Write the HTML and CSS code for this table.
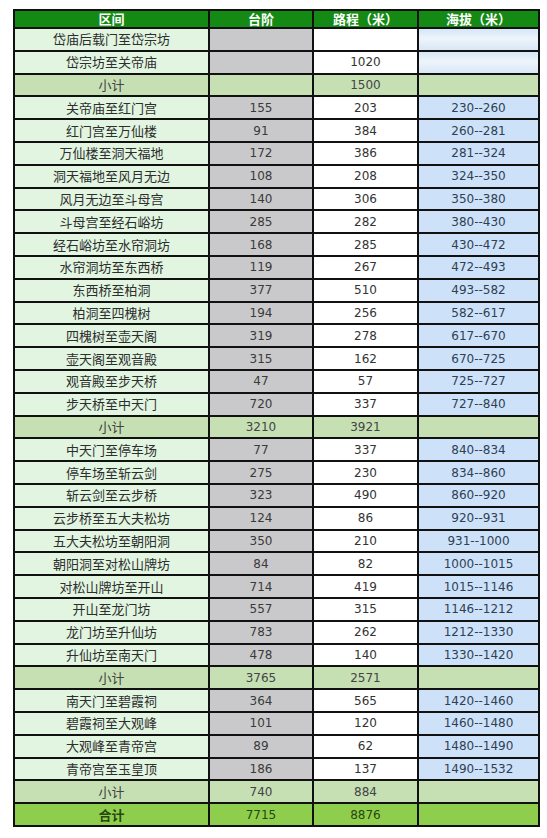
FILE: index.html
```html
<!DOCTYPE html>
<html lang="zh">
<head>
<meta charset="utf-8">
<title>泰山登山台阶路程海拔表</title>
<link rel="stylesheet" href="styles.css">
</head>
<body>
<table class="sheet">
  <colgroup>
    <col class="c-name"><col class="c-step"><col class="c-dist"><col class="c-alt">
  </colgroup>
  <thead>
    <tr class="head"><th>区间</th><th>台阶</th><th>路程（米）</th><th>海拔（米）</th></tr>
  </thead>
  <tbody>
    <tr><td class="name">岱庙后载门至岱宗坊</td><td class="step"></td><td class="dist"></td><td class="alt blur"></td></tr>
    <tr><td class="name">岱宗坊至关帝庙</td><td class="step"></td><td class="dist">1020</td><td class="alt blur"></td></tr>
    <tr class="sub"><td class="name">小计</td><td></td><td>1500</td><td></td></tr>
    <tr><td class="name">关帝庙至红门宫</td><td class="step">155</td><td class="dist">203</td><td class="alt">230--260</td></tr>
    <tr><td class="name">红门宫至万仙楼</td><td class="step">91</td><td class="dist">384</td><td class="alt">260--281</td></tr>
    <tr><td class="name">万仙楼至洞天福地</td><td class="step">172</td><td class="dist">386</td><td class="alt">281--324</td></tr>
    <tr><td class="name">洞天福地至风月无边</td><td class="step">108</td><td class="dist">208</td><td class="alt">324--350</td></tr>
    <tr><td class="name">风月无边至斗母宫</td><td class="step">140</td><td class="dist">306</td><td class="alt">350--380</td></tr>
    <tr><td class="name">斗母宫至经石峪坊</td><td class="step">285</td><td class="dist">282</td><td class="alt">380--430</td></tr>
    <tr><td class="name">经石峪坊至水帘洞坊</td><td class="step">168</td><td class="dist">285</td><td class="alt">430--472</td></tr>
    <tr><td class="name">水帘洞坊至东西桥</td><td class="step">119</td><td class="dist">267</td><td class="alt">472--493</td></tr>
    <tr><td class="name">东西桥至柏洞</td><td class="step">377</td><td class="dist">510</td><td class="alt">493--582</td></tr>
    <tr><td class="name">柏洞至四槐树</td><td class="step">194</td><td class="dist">256</td><td class="alt">582--617</td></tr>
    <tr><td class="name">四槐树至壶天阁</td><td class="step">319</td><td class="dist">278</td><td class="alt">617--670</td></tr>
    <tr><td class="name">壶天阁至观音殿</td><td class="step">315</td><td class="dist">162</td><td class="alt">670--725</td></tr>
    <tr><td class="name">观音殿至步天桥</td><td class="step">47</td><td class="dist">57</td><td class="alt">725--727</td></tr>
    <tr><td class="name">步天桥至中天门</td><td class="step">720</td><td class="dist">337</td><td class="alt">727--840</td></tr>
    <tr class="sub"><td class="name">小计</td><td>3210</td><td>3921</td><td></td></tr>
    <tr><td class="name">中天门至停车场</td><td class="step">77</td><td class="dist">337</td><td class="alt">840--834</td></tr>
    <tr><td class="name">停车场至斩云剑</td><td class="step">275</td><td class="dist">230</td><td class="alt">834--860</td></tr>
    <tr><td class="name">斩云剑至云步桥</td><td class="step">323</td><td class="dist">490</td><td class="alt">860--920</td></tr>
    <tr><td class="name">云步桥至五大夫松坊</td><td class="step">124</td><td class="dist">86</td><td class="alt">920--931</td></tr>
    <tr><td class="name">五大夫松坊至朝阳洞</td><td class="step">350</td><td class="dist">210</td><td class="alt">931--1000</td></tr>
    <tr><td class="name">朝阳洞至对松山牌坊</td><td class="step">84</td><td class="dist">82</td><td class="alt">1000--1015</td></tr>
    <tr><td class="name">对松山牌坊至开山</td><td class="step">714</td><td class="dist">419</td><td class="alt">1015--1146</td></tr>
    <tr><td class="name">开山至龙门坊</td><td class="step">557</td><td class="dist">315</td><td class="alt">1146--1212</td></tr>
    <tr><td class="name">龙门坊至升仙坊</td><td class="step">783</td><td class="dist">262</td><td class="alt">1212--1330</td></tr>
    <tr><td class="name">升仙坊至南天门</td><td class="step">478</td><td class="dist">140</td><td class="alt">1330--1420</td></tr>
    <tr class="sub"><td class="name">小计</td><td>3765</td><td>2571</td><td></td></tr>
    <tr><td class="name">南天门至碧霞祠</td><td class="step">364</td><td class="dist">565</td><td class="alt">1420--1460</td></tr>
    <tr><td class="name">碧霞祠至大观峰</td><td class="step">101</td><td class="dist">120</td><td class="alt">1460--1480</td></tr>
    <tr><td class="name">大观峰至青帝宫</td><td class="step">89</td><td class="dist">62</td><td class="alt">1480--1490</td></tr>
    <tr><td class="name">青帝宫至玉皇顶</td><td class="step">186</td><td class="dist">137</td><td class="alt">1490--1532</td></tr>
    <tr class="sub"><td class="name">小计</td><td>740</td><td>884</td><td></td></tr>
    <tr class="total"><td class="name">合计</td><td>7715</td><td>8876</td><td></td></tr>
  </tbody>
</table>
</body>
</html>
```

FILE: styles.css
```css
html, body {
  margin: 0;
  padding: 0;
  background: #ffffff;
}

body {
  padding: 9px 0 0 13px;
}

.sheet {
  border-collapse: collapse;
  table-layout: fixed;
  width: 525px;
  height: 818px;
  font-family: "DejaVu Sans", "Noto Sans CJK SC", sans-serif;
  font-size: 12px;
  color: #333333;
}

.c-name { width: 195px; }
.c-step { width: 104px; }
.c-dist { width: 105px; }
.c-alt  { width: 121px; }

.sheet th,
.sheet td {
  border: 2px solid #111111;
  padding: 0;
  text-align: center;
  vertical-align: middle;
  line-height: 16px;
  white-space: nowrap;
}

.head th {
  background: #148a14;
  color: #ffffff;
  font-family: "Noto Sans CJK SC", sans-serif;
  font-weight: 700;
  font-size: 13px;
}

.sheet td.name {
  background: #e1f5e1;
  font-family: "Noto Sans CJK SC", sans-serif;
  font-size: 13px;
  color: #2e2e2e;
}

.sheet td.step { background: #c9c9cb; color: #3a3a3a; }
.sheet td.dist { background: #ffffff; }
.sheet td.alt  { background: #cde2f8; color: #2f3f55; }

.sheet td.blur {
  background: linear-gradient(180deg, #d6e6f8 0%, #eef4fb 45%, #d8e7f7 100%);
}

.sub td,
.sheet .sub td.name {
  background: #c6e0b4;
  color: #444444;
}

.total td,
.sheet .total td.name {
  background: #8fce4c;
  color: #26470f;
}

.sheet .total td.name {
  font-weight: 700;
}
```
